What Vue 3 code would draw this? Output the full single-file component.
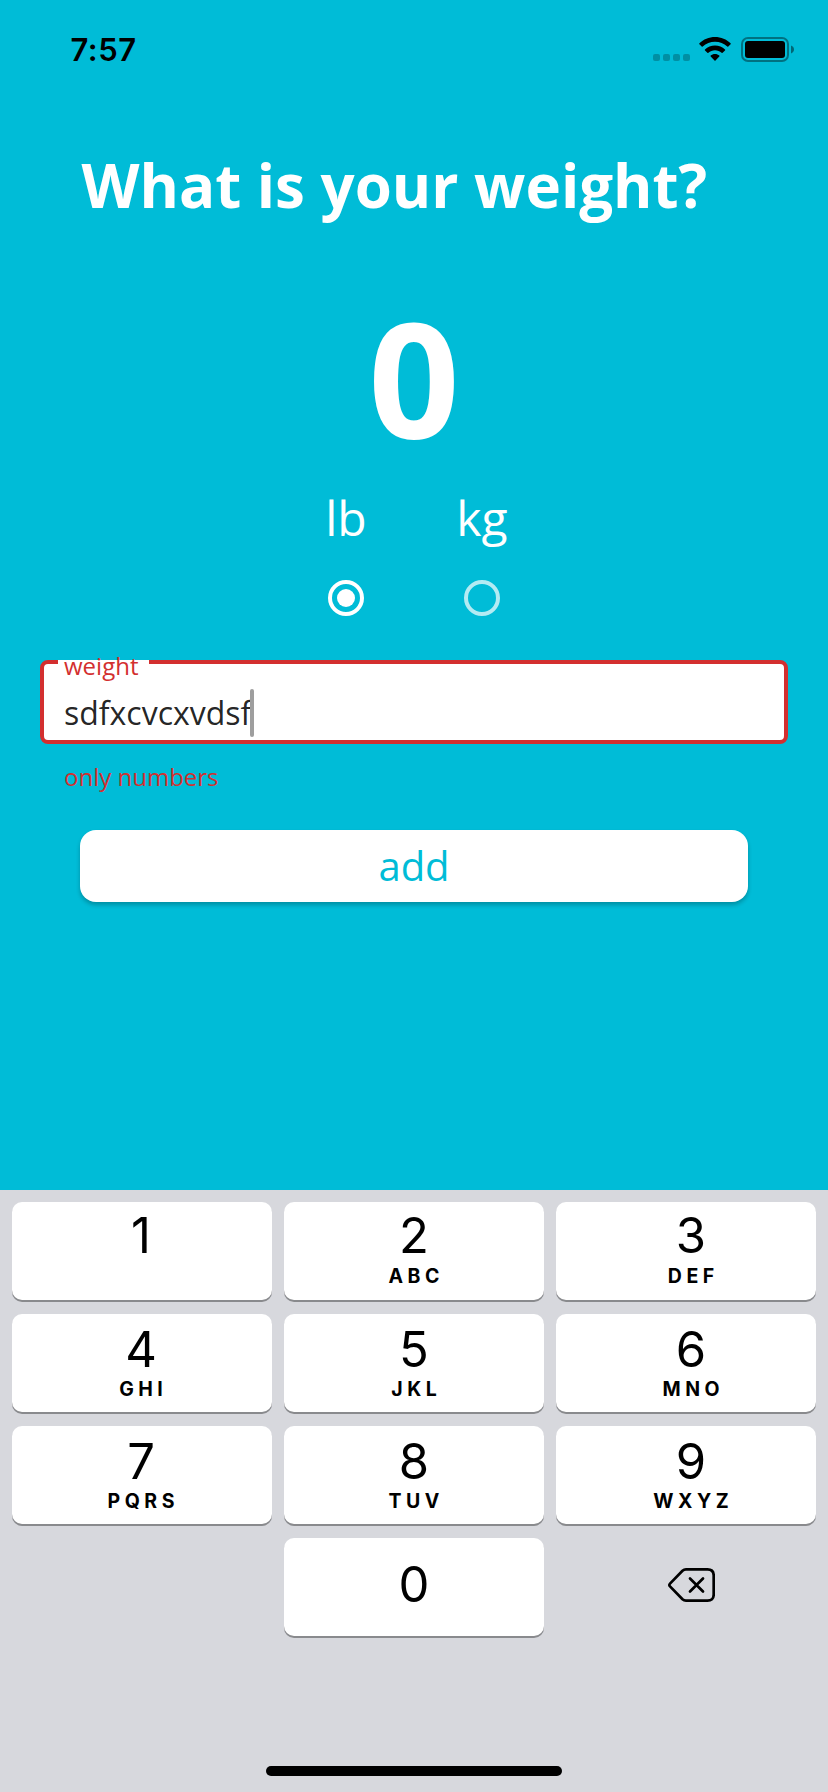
<script setup>
import { ref } from 'vue'

const unit = ref('lb')
const units = ['lb', 'kg']
const weight = ref('sdfxcvcxvdsf')

const rows = [
  [['1', ''], ['2', 'ABC'], ['3', 'DEF']],
  [['4', 'GHI'], ['5', 'JKL'], ['6', 'MNO']],
  [['7', 'PQRS'], ['8', 'TUV'], ['9', 'WXYZ']],
]
</script>

<template>
  <div class="screen">
    <header class="status">
      <span class="time">7:57</span>
      <div class="indicators">
        <div class="signal"><i v-for="n in 4" :key="n"></i></div>
        <svg class="wifi" width="32" height="24" viewBox="0 0 32 24">
          <path d="M16 0C22 0 27.6 2.300 31.600 6.300Q32 6.800 31.600 7.300L29.300 9.600Q28.800 10 28.300 9.600C25 6.400 20.600 4.700 16 4.700S7 6.400 3.700 9.600Q3.200 10 2.700 9.600L.4 7.300Q0 6.800.4 6.300C4.400 2.300 10 0 16 0Z" />
          <path d="M16 8.500C19.900 8.500 23.400 10 26 12.500Q26.500 13 26 13.500L23.600 15.800Q23.100 16.200 22.600 15.800C20.800 14.100 18.500 13.200 16 13.200S11.200 14.100 9.400 15.800Q8.900 16.200 8.400 15.800L6 13.500Q5.500 13 6 12.500C8.600 10 12.100 8.500 16 8.500Z" />
          <path d="M16 17C17.700 17 19.200 17.600 20.300 18.600Q20.800 19.100 20.300 19.600L16.500 23.500Q16 24 15.500 23.500L11.700 19.600Q11.200 19.100 11.700 18.600C12.800 17.600 14.300 17 16 17Z" />
        </svg>
        <svg class="battery" width="54" height="26" viewBox="0 0 54 26">
          <rect x="1" y="1" width="46" height="23" rx="6" fill="none" stroke="#000" stroke-opacity=".4" stroke-width="2" />
          <rect x="4" y="4" width="40" height="17" rx="3" />
          <path d="M50 8.500C52 9.200 53 10.800 53 12.500S52 15.800 50 16.500Z" fill-opacity=".45" />
        </svg>
      </div>
    </header>

    <main class="content">
      <h1 class="title">What is your weight?</h1>
      <div class="amount">0</div>

      <div class="units">
        <label v-for="u in units" :key="u" class="unit" @click="unit = u">
          <span class="unit-name">{{ u }}</span>
          <span class="radio" :class="{ checked: unit === u }"></span>
        </label>
      </div>

      <div class="field">
        <span class="label">weight</span>
        <div class="entry"><span class="value">{{ weight }}</span><i class="caret"></i></div>
      </div>
      <p class="helper">only numbers</p>

      <button class="add">add</button>
    </main>

    <footer class="keyboard">
      <div v-for="(row, i) in rows" :key="i" class="row" :class="{ first: i === 0 }">
        <div v-for="[digit, letters] in row" :key="digit" class="key">
          <span class="digit">{{ digit }}</span>
          <span v-if="letters" class="letters">{{ letters }}</span>
        </div>
      </div>
      <div class="row">
        <div class="blank"></div>
        <div class="key zero"><span class="digit">0</span></div>
        <div class="blank">
          <svg width="48" height="36" viewBox="0 0 48 36" fill="none" stroke="#000" stroke-linecap="round" stroke-linejoin="round">
            <path stroke-width="2.700" d="M19 2.400H40.500Q46.700 2.400 46.700 8.600V27.400Q46.700 33.600 40.500 33.600H19Q17 33.600 15.500 32.200L3 19.400Q1.600 18 3 16.600L15.500 3.800Q17 2.400 19 2.400Z" />
            <path stroke-width="2.700" d="M23 11.500L36 24.500M36 11.500L23 24.500" />
          </svg>
        </div>
      </div>
      <div class="home"></div>
    </footer>
  </div>
</template>

<style>
body {
  margin: 0;
  background: #00bcd7;
}
</style>

<style scoped>
.screen {
  width: 828px;
  height: 1792px;
  display: flex;
  flex-direction: column;
  overflow: hidden;
  background: #00bcd7;
  font-family: "Open Sans", sans-serif;
  color: #fff;
}

.status {
  height: 100px;
  box-sizing: border-box;
  padding: 30px 33px 0 70.500px;
  display: flex;
  justify-content: space-between;
  align-items: flex-start;
  color: #000;
}

.time {
  font: 600 31px/40px Inter, sans-serif;
  letter-spacing: 0.500px;
}

.indicators {
  display: flex;
  padding-top: 7px;
}

.signal {
  display: flex;
  gap: 3px;
  padding-top: 17px;
  margin-right: 9px;
}

.signal i {
  width: 7px;
  height: 7px;
  border-radius: 2px;
  background: rgba(0, 0, 0, 0.24);
}

.wifi {
  margin-right: 10px;
}

.content {
  height: 1090px;
  display: flex;
  flex-direction: column;
}

.title {
  margin: 45px 0 0 81.500px;
  font-size: 60px;
  font-weight: 700;
  line-height: 80px;
  white-space: nowrap;
}

.amount {
  margin-top: 51px;
  font-size: 160px;
  font-weight: 700;
  line-height: 200px;
  text-align: center;
}

.units {
  margin-top: 12px;
  display: flex;
  justify-content: center;
  gap: 56px;
}

.unit {
  width: 80px;
  display: flex;
  flex-direction: column;
  align-items: center;
}

.unit-name {
  font-size: 48px;
  line-height: 60px;
}

.radio {
  width: 36px;
  height: 36px;
  margin-top: 32px;
  box-sizing: border-box;
  border: 4px solid rgba(255, 255, 255, 0.7);
  border-radius: 50%;
  display: grid;
  place-items: center;
}

.radio.checked {
  border-color: #fff;
}

.radio.checked::after {
  content: "";
  width: 18px;
  height: 18px;
  border-radius: 50%;
  background: #fff;
}

.field {
  position: relative;
  height: 84px;
  margin: 44px 40px 0;
  padding: 25px 20px 0;
  box-sizing: border-box;
  border: 4px solid #d32f2f;
  border-radius: 8px;
  background: #fff;
}

/* The floating label cuts a notch into the outline. */
.field::before {
  content: "";
  position: absolute;
  left: 14px;
  top: -4px;
  width: 91px;
  height: 4px;
  background: #fff;
}

.label {
  position: absolute;
  left: 20px;
  top: -13px;
  font-size: 24px;
  line-height: 30px;
  color: #d32f2f;
}

.entry {
  display: flex;
  align-items: center;
  height: 48px;
}

.value {
  font-size: 32px;
  line-height: 48px;
  color: rgba(0, 0, 0, 0.87);
}

.caret {
  width: 4px;
  height: 48px;
  margin-left: -1px;
  border-radius: 2px;
  background: #9e9e9e;
}

.helper {
  margin: 18px 0 0 64px;
  font-size: 24px;
  line-height: 30px;
  color: #d32f2f;
}

.add {
  height: 72px;
  margin: 38px 80px 0;
  padding: 0 0 1px;
  border: 0;
  border-radius: 16px;
  background: #fff;
  box-shadow: 0 3px 4px rgba(0, 0, 0, 0.24);
  font: 400 40px/70px "Open Sans", sans-serif;
  color: #00bcd7;
}

.keyboard {
  height: 602px;
  box-sizing: border-box;
  padding: 12px 12px 0;
  display: flex;
  flex-direction: column;
  gap: 14px;
  background: #d7d8dd;
  color: #000;
  font-family: Inter, sans-serif;
}

.row {
  display: grid;
  grid-template-columns: repeat(3, 260px);
  gap: 12px;
}

.key {
  height: 98px;
  box-sizing: border-box;
  padding-top: 11px;
  border-radius: 10px;
  background: #fff;
  box-shadow: 0 2px 0 #898a8d;
  display: flex;
  flex-direction: column;
  align-items: center;
}

.key:first-child {
  padding-right: 2px;
}

.key:last-child,
.blank:last-child {
  padding-left: 10px;
}

.first .key {
  padding-top: 9px;
}

.digit {
  font-size: 49px;
  line-height: 50px;
}

.letters {
  margin-top: 4px;
  font-size: 19.500px;
  font-weight: 700;
  line-height: 20px;
  letter-spacing: 4.500px;
  margin-right: -4.500px;
}

.first .letters {
  margin-top: 5px;
}

.key.zero {
  padding-top: 22px;
}

.blank {
  display: flex;
  align-items: center;
  justify-content: center;
  padding-bottom: 4px;
}

.home {
  width: 296px;
  height: 10px;
  margin: 116px auto 0;
  border-radius: 5px;
  background: #000;
}
</style>
